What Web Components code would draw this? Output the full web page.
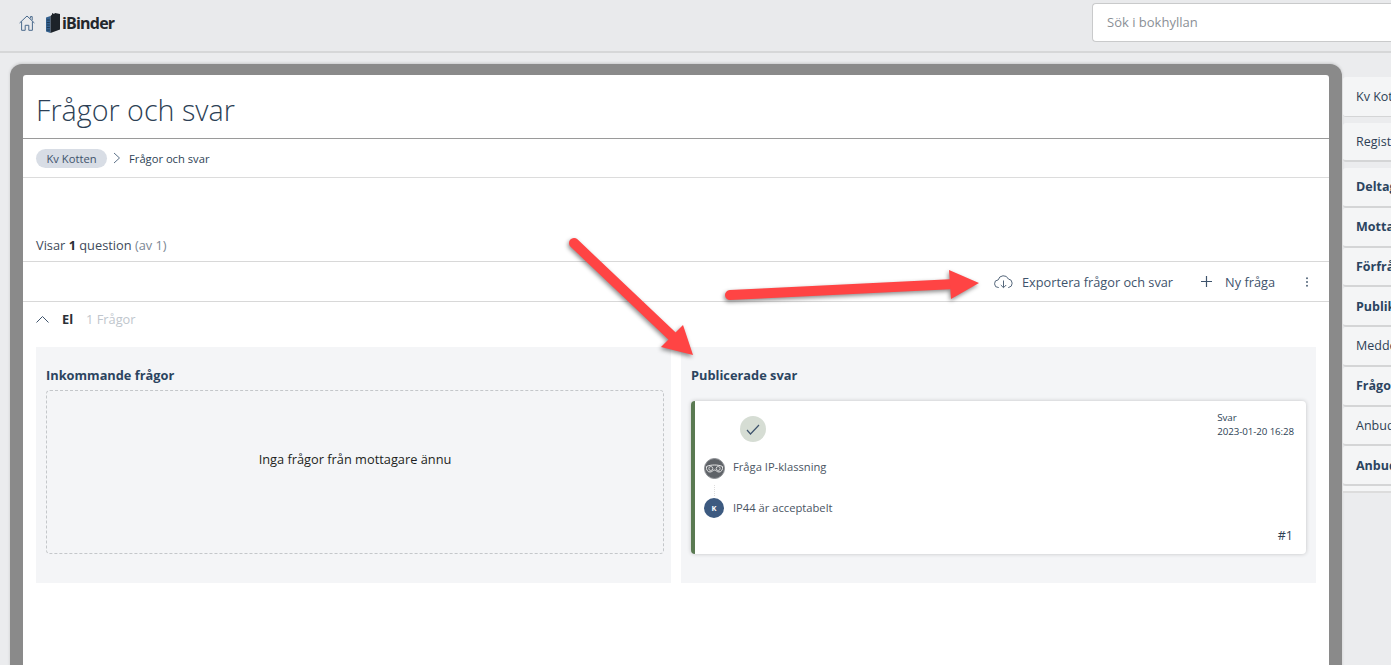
<!DOCTYPE html>
<html lang="sv">
<head>
<meta charset="utf-8">
<title>Frågor och svar</title>
<style>
  html, body { margin: 0; height: 100%; overflow: hidden; background: #ebecee; font-family: "Open Sans", "Noto Sans", sans-serif; color: #2d3f55; }
  .page { display: grid; grid-template-columns: 1fr 48px; height: 612px; padding-left: 10px; gap: 1px; position: relative; }
</style>
</head>
<body>
<ib-topbar></ib-topbar>
<div class="page">
  <ib-frame>
    <ib-page-head title="Frågor och svar" root="Kv Kotten"></ib-page-head>
    <ib-toolbar></ib-toolbar>
    <ib-group name="El" count="1 Frågor">
      <ib-column heading="Inkommande frågor">
        <ib-empty>Inga frågor från mottagare ännu</ib-empty>
      </ib-column>
      <ib-column heading="Publicerade svar">
        <ib-answer-card question="Fråga IP-klassning" answer="IP44 är acceptabelt" kind="Svar" date="2023-01-20 16:28" number="#1"></ib-answer-card>
      </ib-column>
    </ib-group>
  </ib-frame>
  <ib-side-tabs></ib-side-tabs>
</div>
<ib-arrows></ib-arrows>

<script>
class IbTopbar extends HTMLElement {
    constructor() {
        super();
        this.attachShadow({ mode: "open" });
    }
    connectedCallback() {
        this.shadowRoot.innerHTML = `
      <style>
        :host { display:flex; align-items:center; justify-content:space-between; height:51px; background:#e9eaec; border-bottom:2px solid #d6d7d8; margin-bottom:11px; }
        .left { display:flex; align-items:center; padding:0 0 6px 19px; }
        .home { width:16px; height:16px; margin-right:11px; }
        .book { width:14px; height:20px; margin-right:2px; }
        .name { font:700 16px "Open Sans", sans-serif; letter-spacing:-.8px; color:#23272c; }
        .search { width:284px; height:37px; padding-left:14px; margin-top:-7px; display:flex; align-items:center; background:#fff; border:1px solid #c9cacb; border-right:none; border-radius:4px 0 0 4px; font-size:13px; color:#8a8f96; }
      </style>
      <div class="left">
        <svg class="home" viewBox="0 0 16 16" fill="none" stroke="#4a6a8c" stroke-width="1"><path d="M.6 8 8 1l7.400 7M2.600 6.400v8.900h3.600v-5h3.600v5h3.600V6.400M11.400 3.400V1.600h1.800v3.600"/></svg>
        <svg class="book" viewBox="0 0 14 20"><path d="M0 4.500 4.500 3v17L0 18.500z" fill="#34618f"/><path d="M4.500 3 6 1.500V0l2 1 1-1 5 1v15.500L4.500 20z" fill="#1d2329"/><path d="M.8 7h3M.8 9.500h3M.8 12h3M.8 14.500h3M.8 17h3" stroke="#16293d" stroke-width=".7"/></svg>
        <span class="name">iBinder</span>
      </div>
      <div class="search">Sök i bokhyllan</div>
    `;
    }
}

class IbFrame extends HTMLElement {
    constructor() {
        super();
        this.attachShadow({ mode: "open" });
    }
    connectedCallback() {
        this.shadowRoot.innerHTML = `
      <style>
        :host { display:block; background:#8a8a8a; border-radius:12px 12px 0 0; padding:11px 13px 0; box-shadow:0 -1px 3px rgba(0,0,0,.15); }
        .inner { background:#fff; border-radius:3px 3px 0 0; height:100%; }
      </style>
      <div class="inner"><slot></slot></div>
    `;
    }
}

class IbPageHead extends HTMLElement {
    constructor() {
        super();
        this.attachShadow({ mode: "open" });
    }
    connectedCallback() {
        const title = this.getAttribute("title");
        this.shadowRoot.innerHTML = `
      <style>
        :host { display:block; }
        h1 { margin:0; height:64px; box-sizing:border-box; padding:14px 13px 0; font:300 28.700px/42px "Open Sans", sans-serif; color:#2d3f55; border-bottom:1px solid #9a9a9a; }
        .crumbs { display:flex; align-items:center; height:38px; padding-left:13px; border-bottom:1px solid #dcdcdc; font-size:11.200px; color:#2d3f55; }
        .pill { height:19px; line-height:19px; padding:0 10.500px; border-radius:10px; background:#d8dde5; color:#3e536c; }
        svg { width:8px; height:12px; margin:0 8px 0 6px; }
        .count { height:84px; box-sizing:border-box; padding:58px 13px 0; font-size:12.800px; line-height:18px; color:#3e4a5a; border-bottom:1px solid #d8d8d8; }
        .count b { color:#2a2f36; }
        .count span { color:#7b8794; }
      </style>
      <h1>${title}</h1>
      <nav class="crumbs">
        <span class="pill">${this.getAttribute("root")}</span>
        <svg viewBox="0 0 8 12" fill="none" stroke="#5c7188"><path d="M1 1l5.500 5L1 11"/></svg>
        <span>${title}</span>
      </nav>
      <div class="count">Visar <b>1</b> question <span>(av 1)</span></div>
    `;
    }
}

class IbToolbar extends HTMLElement {
    constructor() {
        super();
        this.attachShadow({ mode: "open" });
    }
    connectedCallback() {
        this.shadowRoot.innerHTML = `
      <style>
        :host { display:flex; align-items:center; justify-content:flex-end; height:39px; box-sizing:content-box; padding:0 20px 0 0; border-bottom:1px solid #d8d8d8; font-size:12.750px; color:#3e536c; }
        .item { display:flex; align-items:center; }
        .cloud { width:19px; height:16px; margin-right:9px; }
        .plus { width:11px; height:11px; margin:0 13px 0 28px; }
        .dots { width:4px; height:10px; margin-left:30px; }
      </style>
      <span class="item">
        <svg class="cloud" viewBox="0 0 19 16" fill="none" stroke="#55677b"><path d="M5 13.500H4.500a3.800 3.800 0 0 1-.3-7.600A5.400 5.400 0 0 1 14.400 5a4.300 4.300 0 0 1 .2 8.500H14M9.500 6.500v7M6.800 11l2.700 2.700 2.700-2.700"/></svg>
        Exportera frågor och svar
      </span>
      <span class="item">
        <svg class="plus" viewBox="0 0 12 12" stroke="#3e536c" stroke-width="1.300"><path d="M6 0v12M0 6h12"/></svg>
        Ny fråga
      </span>
      <svg class="dots" viewBox="0 0 4 10" fill="#55677b"><circle cx="2" cy="1.200" r="1"/><circle cx="2" cy="5" r="1"/><circle cx="2" cy="8.800" r="1"/></svg>
    `;
    }
}

class IbGroup extends HTMLElement {
    constructor() {
        super();
        this.attachShadow({ mode: "open" });
    }
    connectedCallback() {
        this.shadowRoot.innerHTML = `
      <style>
        :host { display:block; padding:0 13px; }
        .head { display:flex; align-items:center; height:45px; box-sizing:border-box; padding-bottom:11px; font-size:12.800px; }
        svg { width:13px; height:8px; margin-right:13px; }
        b { color:#2a2f36; margin-right:13px; }
        span { color:#c0c6cd; }
        .cols { display:grid; grid-template-columns:635px 635px; gap:10px; }
      </style>
      <div class="head">
        <svg viewBox="0 0 13 8" fill="none" stroke="#3e536c"><path d="M.5 7.500 6.500 1.500l6 6"/></svg>
        <b>${this.getAttribute("name")}</b>
        <span>${this.getAttribute("count")}</span>
      </div>
      <div class="cols"><slot></slot></div>
    `;
    }
}

class IbColumn extends HTMLElement {
    constructor() {
        super();
        this.attachShadow({ mode: "open" });
    }
    connectedCallback() {
        this.shadowRoot.innerHTML = `
      <style>
        :host { display:block; background:#f4f5f7; height:236px; padding:0 10px; box-sizing:border-box; }
        h3 { margin:0; height:43px; box-sizing:border-box; padding-top:19px; font:700 12.800px/18px "Open Sans", sans-serif; color:#2b4460; }
      </style>
      <h3>${this.getAttribute("heading")}</h3>
      <slot></slot>
    `;
    }
}

class IbEmpty extends HTMLElement {
    constructor() {
        super();
        this.attachShadow({ mode: "open" });
    }
    connectedCallback() {
        this.shadowRoot.innerHTML = `
      <style>
        :host { display:flex; align-items:center; justify-content:center; height:164px; box-sizing:border-box; padding-bottom:26px; margin-right:-3px; border:1px dashed #c4c7ca; border-radius:4px; font-size:12.800px; color:#1d1f22; }
      </style>
      <slot></slot>
    `;
    }
}

class IbAnswerCard extends HTMLElement {
    constructor() {
        super();
        this.attachShadow({ mode: "open" });
    }
    connectedCallback() {
        const a = (n) => this.getAttribute(n);
        this.shadowRoot.innerHTML = `
      <style>
        :host { display:block; position:relative; height:153px; margin-top:11px; background:#fff; border-left:4px solid #5a7a52; border-radius:4px; box-shadow:0 0 4px rgba(0,0,0,.2); box-sizing:border-box; font-size:11.200px; color:#4a5563; }
        .check { position:absolute; top:15px; left:45px; width:26px; height:26px; border-radius:50%; background:#d6ddd4; display:flex; align-items:center; justify-content:center; }
        .check svg { width:14px; height:11px; }
        .meta { position:absolute; top:10px; right:12px; font-size:9.750px; line-height:14px; letter-spacing:-.1px; color:#2d3f55; }
        .rows { padding:55px 0 0 9px; display:grid; grid-template-columns:21px 1fr; column-gap:8px; row-gap:20px; align-items:center; position:relative; }
        .mask { width:21px; height:21px; position:relative; top:2px; }
        .k { width:20px; height:20px; border-radius:50%; background:#3d5a80; color:#fff; font:700 7.500px/20px "Open Sans", sans-serif; text-align:center; position:relative; top:1px; }
        .line { position:absolute; left:19px; top:84px; height:11px; border-left:1px dotted #ddd; }
        .no { position:absolute; right:13px; bottom:10px; font-size:12.500px; color:#2d3f55; }
      </style>
      <span class="check"><svg viewBox="0 0 14 11" fill="none" stroke="#3e536c" stroke-width="1.200"><path d="M1 6l3.500 4L13 1"/></svg></span>
      <div class="meta">${a("kind")}<br>${a("date")}</div>
      <div class="rows">
        <svg class="mask" viewBox="0 0 21 21"><circle cx="10.500" cy="10.500" r="10" fill="#5f6368" stroke="#8c8f93"/><path d="M2.500 8.500c4-2 12-2 16 0 .5 3-1 5.500-3.500 5.500-2.200 0-3-2-4.500-2s-2.300 2-4.500 2C3.500 14 2 11.500 2.500 8.500z" fill="none" stroke="#e8e8e8" stroke-width="1"/><circle cx="6.800" cy="10.500" r="2" fill="none" stroke="#e8e8e8" stroke-width=".8"/><circle cx="14.200" cy="10.500" r="2" fill="none" stroke="#e8e8e8" stroke-width=".8"/></svg>
        <span>${a("question")}</span>
        <span class="k">K</span>
        <span>${a("answer")}</span>
        <i class="line"></i>
      </div>
      <div class="no">${a("number")}</div>
    `;
    }
}

class IbSideTabs extends HTMLElement {
    constructor() {
        super();
        this.attachShadow({ mode: "open" });
    }
    connectedCallback() {
        const tabs = [
            ["Kv Kotten", 39, 1, 6, 0], ["Registrering", 37, 2, 6, 0],
            ["Deltagare", 37.750, 2, 0, 1], ["Mottagare", 37.750, 2, 0, 1], ["Förfrågan", 37.750, 2, 0, 1], ["Publikationer", 37.750, 2, 0, 1],
            ["Meddelanden", 37.750, 2, 0, 0], ["Frågor och svar", 37.750, 2, 0, 1], ["Anbud", 37.750, 2, 0, 0], ["Anbudsutvärdering", 37.750, 2, 0, 1]
        ];
        this.shadowRoot.innerHTML = `
      <style>
        :host { display:block; overflow:hidden; white-space:nowrap; padding-top:13px; font-size:12.500px; color:#2d3f55; }
        .tab { display:flex; align-items:center; padding-left:13px; width:200px; background:#f4f5f6; border-bottom:solid #d4d5d6; border-radius:3px 0 0 3px; }
        .tab.b { font-weight:700; color:#2b4460; }
        .end { height:5px; background:#f4f5f6; border-bottom:2px solid #dcdcdc; width:213px; margin-bottom:10px; }
      </style>
      ${tabs.map(([t, h, line, gap, b]) => `<div class="tab${b ? " b" : ""}" style="height:${h}px;border-bottom-width:${line}px;margin-bottom:${gap}px">${t}</div>`).join("")}
      <div class="end"></div>
    `;
    }
}

class IbArrows extends HTMLElement {
    constructor() {
        super();
        this.attachShadow({ mode: "open" });
    }
    connectedCallback() {
        this.shadowRoot.innerHTML = `
      <style>
        :host { position:absolute; left:0; top:0; width:1391px; height:665px; pointer-events:none; }
        svg { display:block; width:100%; height:100%; filter:drop-shadow(-1px 2px 2px rgba(0,0,0,.45)); }
      </style>
      <svg viewBox="0 0 1391 665">
        <path d="M574 243 672 336" stroke="#ff4444" stroke-width="10" stroke-linecap="round"/>
        <path d="M683 325 693 355 661 347z" fill="#ff4444"/>
        <path d="M730 295 955 284" stroke="#ff4444" stroke-width="10" stroke-linecap="round"/>
        <path d="M949 270 979 283 951 299z" fill="#ff4444"/>
      </svg>
    `;
    }
}

customElements.define("ib-topbar", IbTopbar);
customElements.define("ib-frame", IbFrame);
customElements.define("ib-page-head", IbPageHead);
customElements.define("ib-toolbar", IbToolbar);
customElements.define("ib-group", IbGroup);
customElements.define("ib-column", IbColumn);
customElements.define("ib-empty", IbEmpty);
customElements.define("ib-answer-card", IbAnswerCard);
customElements.define("ib-side-tabs", IbSideTabs);
customElements.define("ib-arrows", IbArrows);
</script>
</body>
</html>
